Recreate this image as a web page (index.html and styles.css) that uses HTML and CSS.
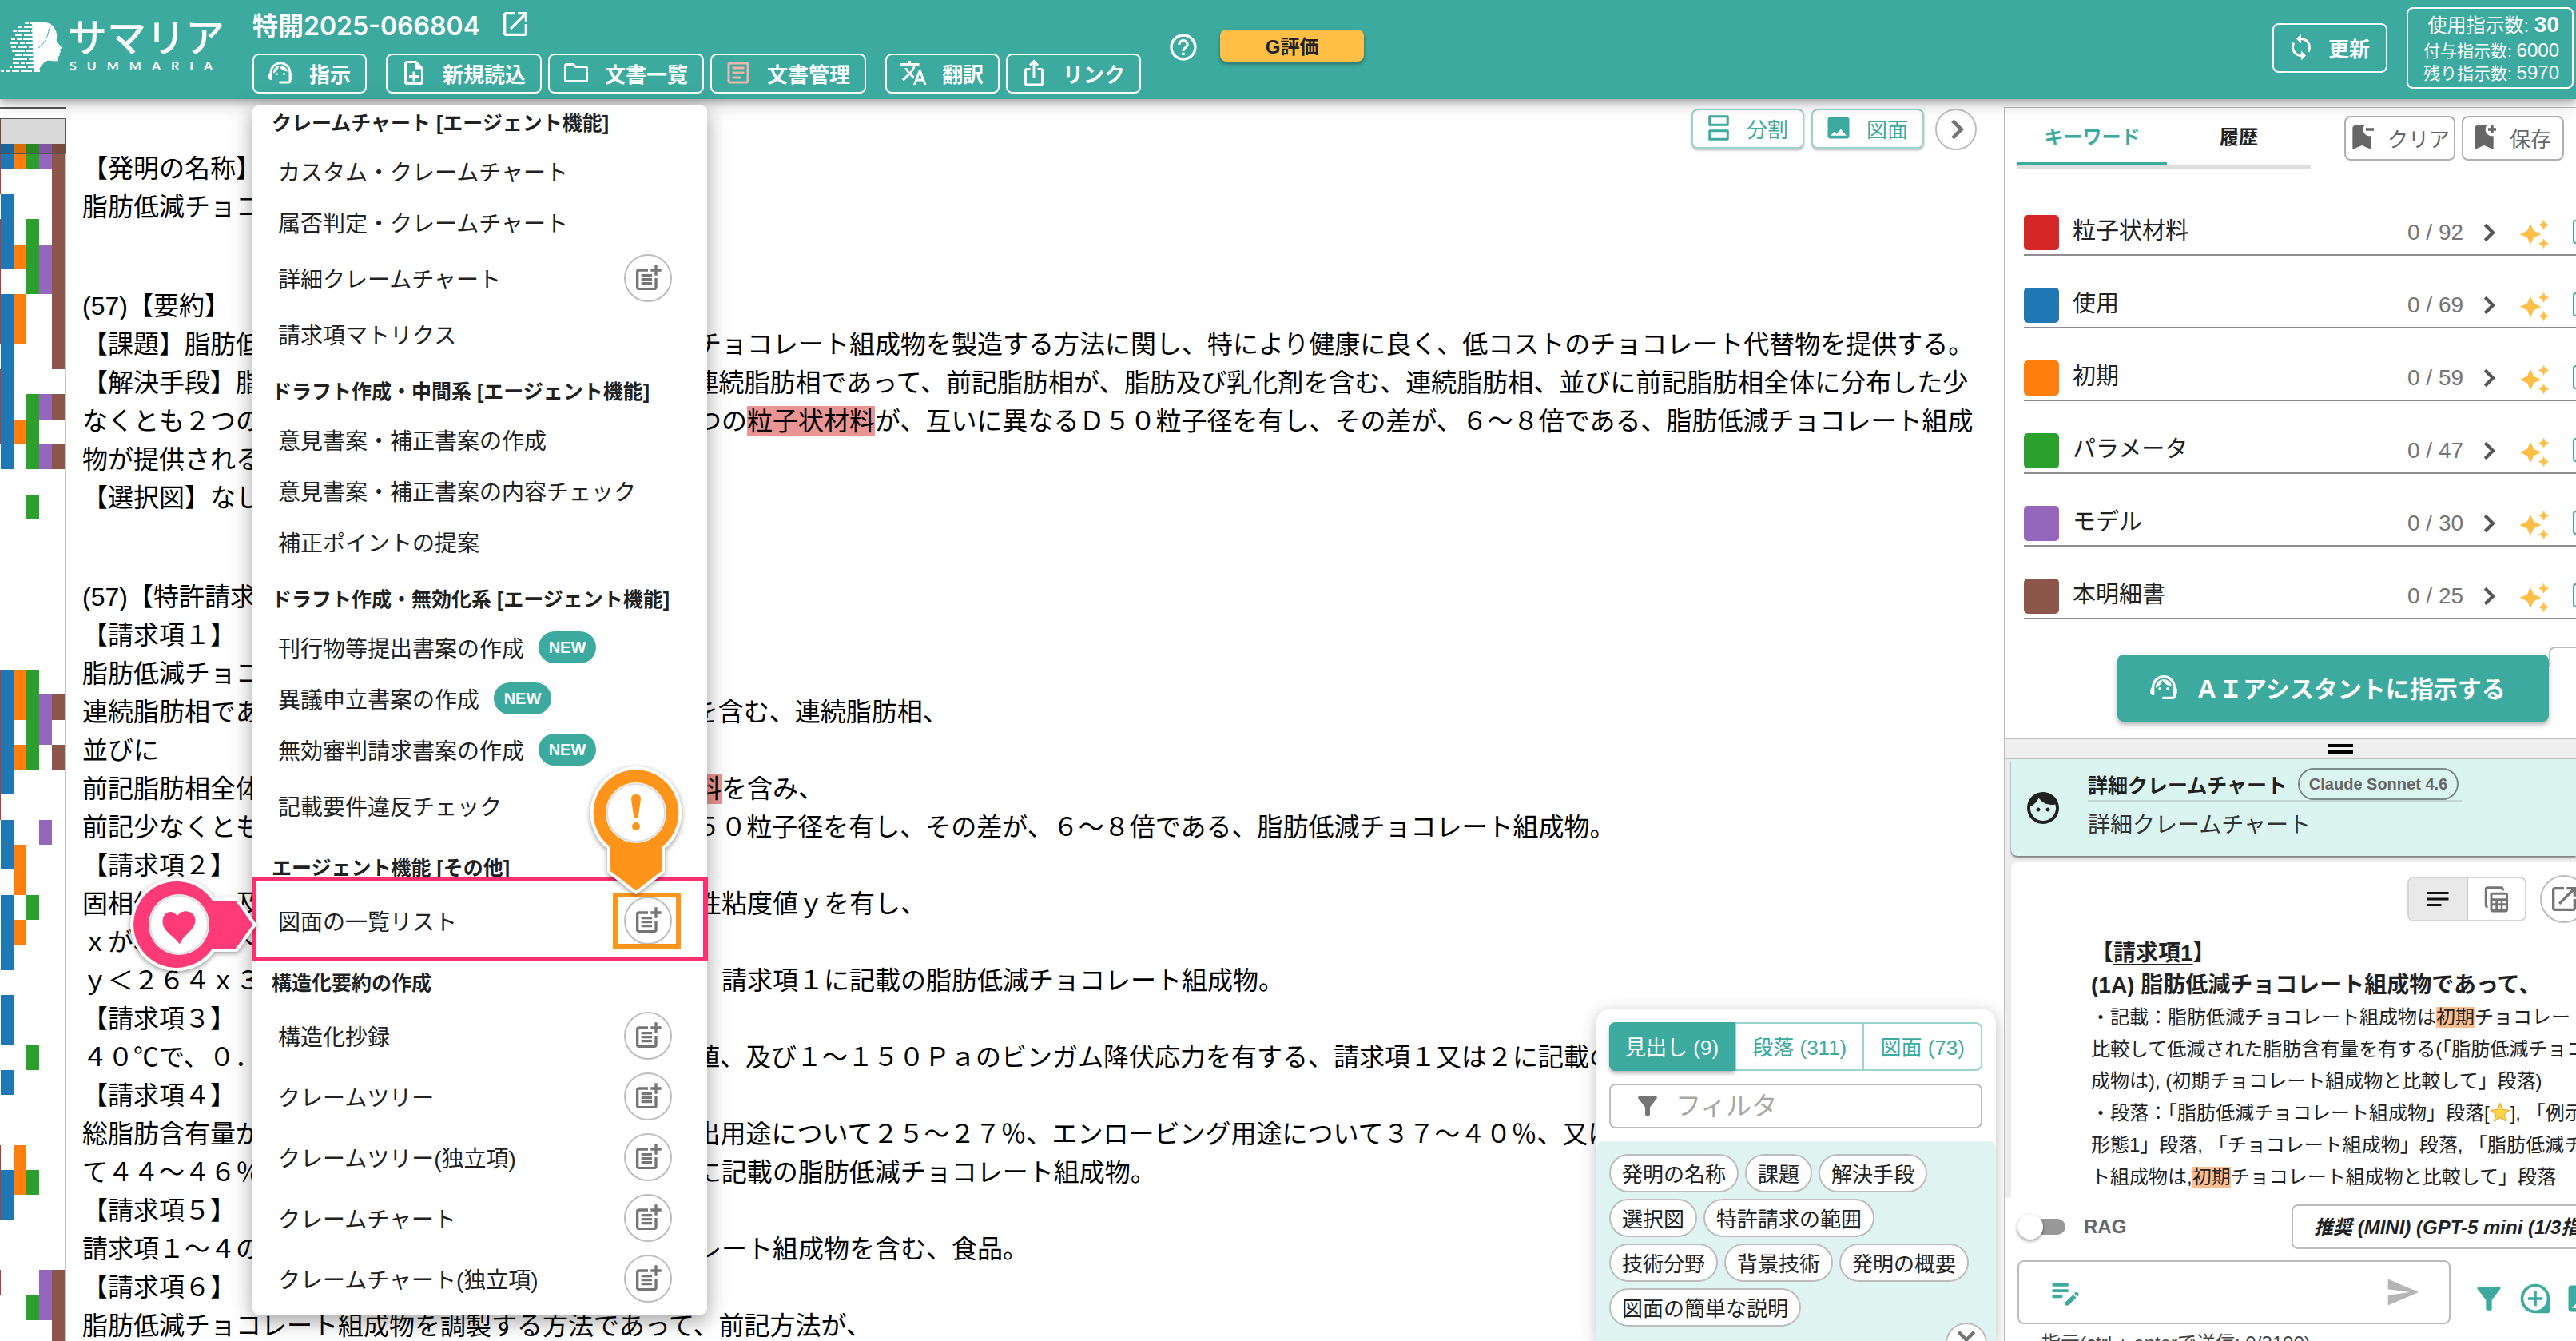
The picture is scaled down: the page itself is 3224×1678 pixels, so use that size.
FILE: index.html
```html
<!DOCTYPE html>
<html lang="ja">
<head>
<meta charset="utf-8">
<title>サマリア</title>
<link rel="stylesheet" href="styles.css">
</head>
<body>
<svg class="sprite" aria-hidden="true">
  <symbol id="i-agent" viewBox="0 0 24 24"><path d="M21 12.22C21 6.73 16.74 3 12 3c-4.69 0-9 3.65-9 9.28-.6.34-1 .98-1 1.72v2c0 1.1.9 2 2 2h1v-6.1c0-3.87 3.13-7 7-7s7 3.13 7 7V19h-8v2h8c1.1 0 2-.9 2-2v-1.22c.59-.31 1-.92 1-1.64v-2.3c0-.7-.41-1.31-1-1.62z"/><circle cx="9" cy="13" r="1"/><circle cx="15" cy="13" r="1"/><path d="M18 11.03C17.52 8.18 15.04 6 12.05 6c-3.03 0-6.29 2.51-6.03 6.45 2.47-1.01 4.33-3.21 4.86-5.89 1.31 2.63 4 4.44 7.12 4.47z"/></symbol>
  <symbol id="i-note-add" viewBox="0 0 24 24"><path d="M13 11h-2v3H8v2h3v3h2v-3h3v-2h-3zm1-9H6c-1.1 0-2 .9-2 2v16c0 1.1.89 2 1.99 2H18c1.1 0 2-.9 2-2V8l-6-6zm4 18H6V4h7v5h5v11z"/></symbol>
  <symbol id="i-folder" viewBox="0 0 24 24"><path d="M9.17 6l2 2H20v10H4V6h5.17M10 4H4c-1.1 0-1.99.9-1.99 2L2 18c0 1.1.9 2 2 2h16c1.1 0 2-.9 2-2V8c0-1.1-.9-2-2-2h-8l-2-2z"/></symbol>
  <symbol id="i-article" viewBox="0 0 24 24"><path d="M19 5v14H5V5h14m0-2H5c-1.1 0-2 .9-2 2v14c0 1.1.9 2 2 2h14c1.1 0 2-.9 2-2V5c0-1.1-.9-2-2-2zM14 17H7v-2h7v2zm3-4H7v-2h10v2zm0-4H7V7h10v2z"/></symbol>
  <symbol id="i-translate" viewBox="0 0 24 24"><path d="M12.87 15.07l-2.54-2.51.03-.03c1.74-1.94 2.98-4.17 3.71-6.53H17V4h-7V2H8v2H1v1.99h11.17C11.5 7.92 10.44 9.75 9 11.35 8.07 10.32 7.3 9.19 6.69 8h-2c.73 1.63 1.73 3.17 2.98 4.56l-5.09 5.02L4 19l5-5 3.11 3.11.76-2.04zM18.5 10h-2L12 22h2l1.12-3h4.75L21 22h2l-4.5-12zm-2.62 7l1.62-4.33L19.12 17h-3.24z"/></symbol>
  <symbol id="i-share" viewBox="0 0 24 24"><path d="M16 5l-1.42 1.42-1.59-1.59V16h-1.98V4.83L9.42 6.42 8 5l4-4 4 4zm4 5v11c0 1.1-.9 2-2 2H6c-1.11 0-2-.9-2-2V10c0-1.11.89-2 2-2h3v2H6v11h12V10h-3V8h3c1.1 0 2 .89 2 2z"/></symbol>
  <symbol id="i-help" viewBox="0 0 24 24"><path d="M11 18h2v-2h-2v2zm1-16C6.48 2 2 6.48 2 12s4.48 10 10 10 10-4.48 10-10S17.52 2 12 2zm0 18c-4.41 0-8-3.59-8-8s3.59-8 8-8 8 3.59 8 8-3.59 8-8 8zm0-14c-2.21 0-4 1.79-4 4h2c0-1.1.9-2 2-2s2 .9 2 2c0 2-3 1.75-3 5h2c0-2.25 3-2.5 3-5 0-2.21-1.79-4-4-4z"/></symbol>
  <symbol id="i-open" viewBox="0 0 24 24"><path d="M19 19H5V5h7V3H5c-1.11 0-2 .9-2 2v14c0 1.1.89 2 2 2h14c1.1 0 2-.9 2-2v-7h-2v7zM14 3v2h3.59l-9.83 9.83 1.41 1.41L19 6.41V10h2V3h-7z"/></symbol>
  <symbol id="i-sync" viewBox="0 0 24 24"><path d="M12 4V1L8 5l4 4V6c3.31 0 6 2.69 6 6 0 1.01-.25 1.97-.7 2.8l1.46 1.46C19.54 15.03 20 13.57 20 12c0-4.42-3.58-8-8-8zm0 14c-3.31 0-6-2.69-6-6 0-1.01.25-1.97.7-2.8L5.24 7.74C4.46 8.97 4 10.43 4 12c0 4.42 3.58 8 8 8v3l4-4-4-4v3z"/></symbol>
  <symbol id="i-right" viewBox="0 0 24 24"><path d="M9.5 5.5L16 12l-6.500 6.500" fill="none" stroke="currentColor" stroke-width="2.800"/></symbol>
  <symbol id="i-down" viewBox="0 0 24 24"><path d="M5.500 8.500L12 15l6.500-6.500" fill="none" stroke="currentColor" stroke-width="3"/></symbol>
  <symbol id="i-image" viewBox="0 0 24 24"><path d="M21 19V5c0-1.1-.9-2-2-2H5c-1.1 0-2 .9-2 2v14c0 1.1.9 2 2 2h14c1.1 0 2-.9 2-2zM8.500 15.200l2 2 3.500-4.200 4.500 5.500H5.500z"/></symbol>
  <symbol id="i-split" viewBox="0 0 24 24"><path d="M4.500 2.500h15v7h-15zM4.500 14.500h15v7h-15z" fill="none" stroke="currentColor" stroke-width="2" stroke-linejoin="round"/></symbol>
  <symbol id="i-funnel" viewBox="0 0 24 24"><path d="M4.25 5.61C6.27 8.2 10 13 10 13v6c0 .55.45 1 1 1h2c.55 0 1-.45 1-1v-6s3.720-4.800 5.740-7.390c.51-.66.04-1.610-.79-1.610H5.040c-.83 0-1.300.95-.79 1.610z"/></symbol>
  <symbol id="i-mark-minus" viewBox="0 0 24 24"><path d="M21 7h-6V5h6v2zM19 21l-7-3-7 3V5c0-1.1.9-2 2-2h7c-.63.84-1 1.87-1 3 0 2.76 2.24 5 5 5 .34 0 .68-.03 1-.1V21z"/></symbol>
  <symbol id="i-mark-plus" viewBox="0 0 24 24"><path d="M21 7h-2v2h-2V7h-2V5h2V3h2v2h2v2zM19 21l-7-3-7 3V5c0-1.1.9-2 2-2h7c-.63.84-1 1.87-1 3 0 2.76 2.24 5 5 5 .34 0 .68-.03 1-.1V21z"/></symbol>
  <symbol id="i-spark" viewBox="0 0 24 24"><path d="M19 9l1.25-2.75L23 5l-2.75-1.25L19 1l-1.25 2.75L15 5l2.75 1.25L19 9zm-7.5.5L9 4 6.500 9.500 1 12l5.500 2.500L9 20l2.500-5.500L17 12l-5.500-2.500zM19 15l-1.250 2.750L15 19l2.750 1.250L19 23l1.250-2.750L23 19l-2.750-1.250L19 15z"/></symbol>
  <symbol id="i-face" viewBox="0 0 24 24"><path d="M9 11.75c-.69 0-1.25.56-1.25 1.25s.56 1.25 1.25 1.25 1.25-.56 1.25-1.25-.56-1.25-1.25-1.25zm6 0c-.69 0-1.25.56-1.25 1.25s.56 1.25 1.25 1.25 1.25-.56 1.25-1.25-.56-1.25-1.25-1.25zM12 2C6.480 2 2 6.480 2 12s4.480 10 10 10 10-4.480 10-10S17.520 2 12 2zm0 18c-4.410 0-8-3.590-8-8 0-.29.02-.58.05-.86 2.360-1.050 4.230-2.980 5.210-5.370C11.070 8.330 14.050 10 17.420 10c.78 0 1.530-.09 2.250-.26.21.71.33 1.470.33 2.260 0 4.410-3.590 8-8 8z"/></symbol>
  <symbol id="i-notes" viewBox="0 0 24 24"><path d="M3 18h12v-2H3v2zM3 6v2h18V6H3zm0 7h18v-2H3v2z"/></symbol>
  <symbol id="i-table" viewBox="0 0 24 24"><path d="M5 18.500a1.500 1.500 0 0 1-1.500-1.500V4A1.500 1.500 0 0 1 5 2.500h11A1.500 1.500 0 0 1 17.500 4v1" fill="none" stroke="currentColor" stroke-width="2"/><path fill-rule="evenodd" d="M9 6.500h11a2 2 0 0 1 2 2V21a2 2 0 0 1-2 2H9a2 2 0 0 1-2-2V8.500a2 2 0 0 1 2-2zM9 8.500v3h11v-3zM9 13.500v2h2.500v-2zM13.300 13.500v2h2.500v-2zM17.500 13.500v2H20v-2zM9 17.500v3h2.500v-3zM13.300 17.500v3h2.500v-3zM17.500 17.500v3H20v-3z"/></symbol>
  <symbol id="i-edit" viewBox="0 0 24 24"><path d="M3 10h11v2H3v-2zm0-2h11V6H3v2zm0 8h7v-2H3v2zm15.010-3.130l.71-.71c.39-.39 1.020-.39 1.410 0l.71.71c.39.39.39 1.020 0 1.410l-.71.71-2.120-2.120zm-.71.71l-5.300 5.300V21h2.120l5.300-5.300-2.120-2.120z"/></symbol>
  <symbol id="i-send" viewBox="0 0 24 24"><path d="M2.010 21L23 12 2.010 3 2 10l15 2-15 2z"/></symbol>
  <symbol id="i-add-chat" viewBox="0 0 24 24"><path fill-rule="evenodd" d="M12 2a10 10 0 1 0 0 20h8a2 2 0 0 0 2-2v-8A10 10 0 0 0 12 2zm0 18a8 8 0 1 1 0-16 8 8 0 0 1 0 16z"/><path d="M13 7h-2v4H7v2h4v4h2v-4h4v-2h-4z"/></symbol>
  <symbol id="i-post-add" viewBox="0 0 24 24"><path d="M17 19.220H5V7h7V5H5c-1.100 0-2 .9-2 2v12c0 1.100.9 2 2 2h12c1.100 0 2-.9 2-2v-7h-2v7.220z"/><path d="M19 2h-2v3h-3v2h3v3h2V7h3V5h-3V2zM7 9h8v2H7zM7 12h8v2H7zM7 15h8v2H7z"/></symbol>
</svg>

<header class="topbar">
  <div class="logo">
    <svg class="logo-face" viewBox="0 0 78 64" aria-hidden="true">
      <path fill="currentColor" d="M40 1h15c9 0 14 6 16 14 1 4-1 7 0 10l6 7c1 2-2 2-2 3l1 3-2 2 1 2-2 2c1 6-3 6-8 5-7-1-9 1-11 4-4 4-5 6-5 10H42z"/>
      <path fill="none" stroke="#3caa9e" stroke-width="1" d="M64 5c-5 6-2 18-16 28"/>
      <path fill="none" stroke="currentColor" stroke-width="2" d="M31 2h5m2 0h6M22 7h6m2 0h10M16 12h5m2 0h14m2 0h5M19 17h9m2 0h12M14 22h5m2 0h6m2 0h14M13 27h10m2 0h6m2 0h10M14 32h6m2 0h12m2 0h8M15 37h16m2 0h10M19 42h8m2 0h12M16 47h18m2 0h8M16 52h8m2 0h5m2 0h10M12 57h3m2 0h16m2 0h9M1 62h4m2 0h6m2 0h9m2 0h14m2 0h8"/>
    </svg>
    <div class="logo-text"><span class="logo-name">サマリア</span><span class="logo-roman">SUMMARIA</span></div>
  </div>
  <div class="doc-tools">
    <h1 class="doc-id">特開2025-066804 <a href="#" class="doc-link" aria-label="別ウィンドウで開く"><svg class="icon"><use href="#i-open"/></svg></a></h1>
    <div class="tool-row">
      <div class="menu-anchor">
        <button class="tool"><svg class="icon icon-s"><use href="#i-agent"/></svg>指示</button>
        <div class="menu">
          <h2 class="menu-head first">クレームチャート [エージェント機能]</h2>
          <ul>
            <li><button class="item">カスタム・クレームチャート</button></li>
            <li><button class="item">属否判定・クレームチャート</button></li>
            <li class="tall"><button class="item">詳細クレームチャート</button><button class="round" aria-label="追加"><svg class="icon"><use href="#i-post-add"/></svg></button></li>
            <li><button class="item">請求項マトリクス</button></li>
          </ul>
          <h2 class="menu-head">ドラフト作成・中間系 [エージェント機能]</h2>
          <ul>
            <li><button class="item">意見書案・補正書案の作成</button></li>
            <li><button class="item">意見書案・補正書案の内容チェック</button></li>
            <li><button class="item">補正ポイントの提案</button></li>
          </ul>
          <h2 class="menu-head">ドラフト作成・無効化系 [エージェント機能]</h2>
          <ul>
            <li><button class="item">刊行物等提出書案の作成<span class="new">NEW</span></button></li>
            <li><button class="item">異議申立書案の作成<span class="new">NEW</span></button></li>
            <li><button class="item">無効審判請求書案の作成<span class="new">NEW</span></button></li>
            <li class="tall"><button class="item">記載要件違反チェック</button><button class="round" aria-label="追加"><svg class="icon"><use href="#i-post-add"/></svg></button></li>
          </ul>
          <h2 class="menu-head">エージェント機能 [その他]</h2>
          <ul>
            <li class="tall marked"><button class="item">図面の一覧リスト</button><button class="round" aria-label="追加"><svg class="icon"><use href="#i-post-add"/></svg></button>
              <span class="frame-pink"></span><span class="frame-orange"></span>
              <svg class="pin-pink" viewBox="0 0 170 124" aria-hidden="true">
                <g fill="#ff3a78" stroke="#fff" stroke-width="4" stroke-linejoin="round"><path d="M62 6a56 56 0 1 0 43 88h29l23-32-23-32h-29A56 56 0 0 0 62 6z"/></g>
                <circle cx="62" cy="62" r="38" fill="#fff"/><circle cx="62" cy="62" r="36" fill="none" stroke="#ddd" stroke-width="2"/>
                <path fill="#ff3a78" transform="rotate(10 62 62)" d="M67 86C58 76 42 74 41 60c-1-11 10-16 17-8 4-11 20-11 23 0 3 13-11 20-14 34z"/>
              </svg>
              <svg class="pin-orange" viewBox="0 0 124 166" aria-hidden="true">
                <path fill="#ff941a" stroke="#fff" stroke-width="4" stroke-linejoin="round" d="M62 6a56 56 0 0 0-34 100v30l34 26 34-26v-30A56 56 0 0 0 62 6z"/>
                <circle cx="62" cy="62" r="38" fill="#fff"/><circle cx="62" cy="62" r="36" fill="none" stroke="#ddd" stroke-width="2"/>
                <path fill="#ff941a" d="M62 39c4 0 6 2 6 6l-3 21c0 4-6 4-6 0l-3-21c0-4 2-6 6-6z"/><circle cx="62" cy="79" r="5" fill="#ff941a"/>
              </svg>
            </li>
          </ul>
          <h2 class="menu-head">構造化要約の作成</h2>
          <ul>
            <li class="tall"><button class="item">構造化抄録</button><button class="round" aria-label="追加"><svg class="icon"><use href="#i-post-add"/></svg></button></li>
            <li class="tall"><button class="item">クレームツリー</button><button class="round" aria-label="追加"><svg class="icon"><use href="#i-post-add"/></svg></button></li>
            <li class="tall"><button class="item">クレームツリー(独立項)</button><button class="round" aria-label="追加"><svg class="icon"><use href="#i-post-add"/></svg></button></li>
            <li class="tall"><button class="item">クレームチャート</button><button class="round" aria-label="追加"><svg class="icon"><use href="#i-post-add"/></svg></button></li>
            <li class="tall"><button class="item">クレームチャート(独立項)</button><button class="round" aria-label="追加"><svg class="icon"><use href="#i-post-add"/></svg></button></li>
          </ul>
        </div>
      </div>
      <div class="tool-group">
        <button class="tool"><svg class="icon icon-s"><use href="#i-note-add"/></svg>新規読込</button>
        <button class="tool"><svg class="icon icon-s"><use href="#i-folder"/></svg>文書一覧</button>
        <button class="tool"><svg class="icon icon-s pink"><use href="#i-article"/></svg>文書管理</button>
      </div>
      <div class="tool-group">
        <button class="tool"><svg class="icon icon-s"><use href="#i-translate"/></svg>翻訳</button>
        <button class="tool"><svg class="icon icon-s"><use href="#i-share"/></svg>リンク</button>
      </div>
    </div>
  </div>
  <button class="help" aria-label="ヘルプ"><svg class="icon"><use href="#i-help"/></svg></button>
  <button class="rating">G評価</button>
  <button class="tool refresh"><svg class="icon icon-s"><use href="#i-sync"/></svg>更新</button>
  <div class="usage">
    <div class="usage-main">使用指示数: <b>30</b></div>
    <div class="usage-sub">付与指示数: <span>6000</span></div>
    <div class="usage-sub">残り指示数: <span>5970</span></div>
  </div>
</header>

<main class="layout">
  <nav class="minimap" aria-label="出現位置">
    <svg width="82" height="1544" viewBox="0 134 82 1544" aria-hidden="true">
      <path fill="#b03a3e" d="M0 148h1v95h-1zM0 274h1v157h-1zM0 462h1v94h-1zM0 838h1v188h-1zM0 1433h1v93h-1zM0 1589h1v31h-1z"/>
      <path fill="#1f77b4" d="M1 180h16v32h-16zM1 243h16v94h-16zM1 368h16v219h-16zM1 838h16v156h-16zM1 1026h16v62h-16zM1 1120h16v94h-16zM1 1245h16v63h-16zM1 1339h16v31h-16zM1 1464h16v62h-16z"/>
      <path fill="#ff7f0e" d="M17 180h16v32h-16zM17 306h16v31h-16zM17 368h16v63h-16zM17 525h16v31h-16zM17 838h16v63h-16zM17 932h16v31h-16zM17 1057h16v63h-16zM17 1151h16v31h-16zM17 1433h16v62h-16z"/>
      <path fill="#2ca02c" d="M33 180h16v32h-16zM33 274h16v94h-16zM33 493h16v94h-16zM33 619h16v31h-16zM33 838h16v125h-16zM33 1120h16v31h-16zM33 1308h16v31h-16zM33 1464h16v31h-16zM33 1620h16v32h-16z"/>
      <path fill="#9467bd" d="M49 180h16v32h-16zM49 306h16v62h-16zM49 493h16v32h-16zM49 556h16v31h-16zM49 869h16v63h-16zM49 1026h16v31h-16zM49 1589h16v63h-16z"/>
      <path fill="#8c564b" d="M65 180h16v282h-16zM65 493h16v32h-16zM65 556h16v31h-16zM65 869h16v32h-16zM65 932h16v31h-16zM65 1589h16v89h-16z"/>
      <path fill="#555" d="M0 134h82v2h-82z"/>
      <path fill="#000" fill-opacity=".15" stroke="#555" d="M0 148.500h81.500v44h-81.500z"/>
      <path fill="#c4c4c4" d="M81 193h1v1485h-1z"/>
    </svg>
  </nav>

  <section class="document">
    <article class="doc-text">
      <div class="block">
        <p>【発明の名称】</p>
        <p>脂肪低減チョコレート</p>
      </div>
      <div class="block">
        <p>(57)【要約】</p>
        <p>【課題】脂肪低減チョコレート組成物及び該脂肪低減チョコレート組成物を製造する方法に関し、特により健康に良く、低コストのチョコレート代替物を提供する。</p>
        <p>【解決手段】脂肪低減チョコレート組成物であって、連続脂肪相であって、前記脂肪相が、脂肪及び乳化剤を含む、連続脂肪相、並びに前記脂肪相全体に分布した少</p>
        <p>なくとも２つの粒子状材料を含み、前記少なくとも２つの<mark>粒子状材料</mark>が、互いに異なるＤ５０粒子径を有し、その差が、６～８倍である、脂肪低減チョコレート組成</p>
        <p>物が提供される。</p>
        <p>【選択図】なし</p>
      </div>
      <div class="block">
        <p>(57)【特許請求の範囲】</p>
        <p>【請求項１】</p>
        <p>脂肪低減チョコレート組成物であって、</p>
        <p>連続脂肪相であって、前記脂肪相が、脂肪及び乳化剤を含む、連続脂肪相、</p>
        <p>並びに</p>
        <p>前記脂肪相全体に分布した少なくとも２つの<mark>粒子状材料</mark>を含み、</p>
        <p>前記少なくとも２つの粒子状材料が、互いに異なるＤ５０粒子径を有し、その差が、６～８倍である、脂肪低減チョコレート組成物。</p>
        <p>【請求項２】</p>
        <p>固相体積ｘ、及び該脂肪低減チョコレート組成物の塑性粘度値ｙを有し、</p>
        <p>ｘが、０．５～０．８であり、</p>
        <p>ｙ＜２６４ｘ３－４９４ｘ２＋３０６ｘ－６２．４３、請求項１に記載の脂肪低減チョコレート組成物。</p>
        <p>【請求項３】</p>
        <p>４０℃で、０．１～２０Ｐａ・ｓのプラスチック粘度値、及び１～１５０Ｐａのビンガム降伏応力を有する、請求項１又は２に記載の脂肪低減チョコレート組成物。</p>
        <p>【請求項４】</p>
        <p>総脂肪含有量が、成形用途について２８～３０％、押出用途について２５～２７％、エンロービング用途について３７～４０％、又はアイスクリーム用途につい</p>
        <p>て４４～４６％である、請求項１～３のいずれか１項に記載の脂肪低減チョコレート組成物。</p>
        <p>【請求項５】</p>
        <p>請求項１～４のいずれか一項に記載の脂肪低減チョコレート組成物を含む、食品。</p>
        <p>【請求項６】</p>
        <p>脂肪低減チョコレート組成物を調製する方法であって、前記方法が、</p>
      </div>
    </article>

    <div class="view-tools">
      <button class="view"><svg class="icon icon-s"><use href="#i-split"/></svg>分割</button>
      <button class="view"><svg class="icon icon-s"><use href="#i-image"/></svg>図面</button>
      <button class="round small" aria-label="次へ"><svg class="icon"><use href="#i-right"/></svg></button>
    </div>

    <div class="outline">
      <div class="outline-tabs">
        <button class="on">見出し (9)</button><button>段落 (311)</button><button>図面 (73)</button>
      </div>
      <label class="filter"><svg class="icon icon-s"><use href="#i-funnel"/></svg><input type="text" placeholder="フィルタ" aria-label="フィルタ"></label>
      <div class="chips">
        <button>発明の名称</button><button>課題</button><button>解決手段</button><button>選択図</button><button>特許請求の範囲</button><button>技術分野</button><button>背景技術</button><button>発明の概要</button><button>図面の簡単な説明</button>
      </div>
      <button class="round small to-bottom" aria-label="下へ"><svg class="icon icon-s"><use href="#i-down"/></svg></button>
    </div>
  </section>

  <aside class="side">
    <section class="keywords">
      <div class="side-bar">
        <div class="tabs"><button class="on">キーワード</button><button>履歴</button></div>
        <button class="ghost"><svg class="icon"><use href="#i-mark-minus"/></svg>クリア</button>
        <button class="ghost wide"><svg class="icon"><use href="#i-mark-plus"/></svg>保存</button>
      </div>
      <ul class="kw-list">
        <li><span class="swatch red"></span><span class="kw">粒子状材料</span><span class="count">0 / 92</span><button class="plain next" aria-label="次へ"><svg class="icon"><use href="#i-right"/></svg></button><button class="plain spark" aria-label="提案"><svg class="icon"><use href="#i-spark"/></svg></button><button class="tick" aria-label="選択"></button></li>
        <li><span class="swatch blue"></span><span class="kw">使用</span><span class="count">0 / 69</span><button class="plain next" aria-label="次へ"><svg class="icon"><use href="#i-right"/></svg></button><button class="plain spark" aria-label="提案"><svg class="icon"><use href="#i-spark"/></svg></button><button class="tick" aria-label="選択"></button></li>
        <li><span class="swatch orange"></span><span class="kw">初期</span><span class="count">0 / 59</span><button class="plain next" aria-label="次へ"><svg class="icon"><use href="#i-right"/></svg></button><button class="plain spark" aria-label="提案"><svg class="icon"><use href="#i-spark"/></svg></button><button class="tick" aria-label="選択"></button></li>
        <li><span class="swatch green"></span><span class="kw">パラメータ</span><span class="count">0 / 47</span><button class="plain next" aria-label="次へ"><svg class="icon"><use href="#i-right"/></svg></button><button class="plain spark" aria-label="提案"><svg class="icon"><use href="#i-spark"/></svg></button><button class="tick" aria-label="選択"></button></li>
        <li><span class="swatch purple"></span><span class="kw">モデル</span><span class="count">0 / 30</span><button class="plain next" aria-label="次へ"><svg class="icon"><use href="#i-right"/></svg></button><button class="plain spark" aria-label="提案"><svg class="icon"><use href="#i-spark"/></svg></button><button class="tick" aria-label="選択"></button></li>
        <li><span class="swatch brown"></span><span class="kw">本明細書</span><span class="count">0 / 25</span><button class="plain next" aria-label="次へ"><svg class="icon"><use href="#i-right"/></svg></button><button class="plain spark" aria-label="提案"><svg class="icon"><use href="#i-spark"/></svg></button><button class="tick" aria-label="選択"></button></li>
      </ul>
      <div class="ask-row"><button class="ask"><svg class="icon"><use href="#i-agent"/></svg>ＡＩアシスタントに指示する</button><button class="more" aria-label="追加"></button></div>
    </section>
    <div class="splitter" role="separator"><span></span><span></span></div>
    <section class="chat">
      <div class="ask-card">
        <svg class="icon face"><use href="#i-face"/></svg>
        <div class="ask-body">
          <div class="ask-head"><b>詳細クレームチャート</b><span class="model">Claude Sonnet 4.6</span></div>
          <p>詳細クレームチャート</p>
        </div>
      </div>
      <div class="answer">
        <div class="answer-tools">
          <div class="toggle"><button class="on" aria-label="文章"><svg class="icon"><use href="#i-notes"/></svg></button><button aria-label="表"><svg class="icon"><use href="#i-table"/></svg></button></div>
          <button class="round" aria-label="開く"><svg class="icon"><use href="#i-open"/></svg></button>
        </div>
        <div class="answer-text">
          <h3>【<u>請求項1</u>】</h3>
          <h3>(1A) 脂肪低減チョコレート組成物であって、</h3>
          <p>・記載：脂肪低減チョコレート組成物は<mark>初期</mark>チョコレート組成物と</p>
          <p>比較して低減された脂肪含有量を有する(「脂肪低減チョコレート組</p>
          <p>成物は), (初期チョコレート組成物と比較して」段落)</p>
          <p>・段落：「脂肪低減チョコレート組成物」段落[<svg class="star" viewBox="0 0 24 24" role="img" aria-label="星"><path fill="#ffd54a" stroke="#e8a92c" d="M12 1.500l3 7.300 7.800.6-6 5.100 1.900 7.700L12 18l-6.700 4.200 1.900-7.700-6-5.100 7.800-.6z"/></svg>], 「例示的な実施</p>
          <p>形態1」段落, 「チョコレート組成物」段落, 「脂肪低減チョコレー</p>
          <p>ト組成物は,<mark>初期</mark>チョコレート組成物と比較して」段落</p>
        </div>
      </div>
    </section>
    <form class="composer">
      <div class="options">
        <label class="rag"><input type="checkbox">RAG</label>
        <select aria-label="モデル"><option>推奨 (MINI) (GPT-5 mini (1/3指示数))</option></select>
      </div>
      <div class="entry">
        <div class="box"><svg class="icon teal"><use href="#i-edit"/></svg><textarea aria-label="指示" rows="1"></textarea><button type="button" class="plain send" aria-label="送信"><svg class="icon"><use href="#i-send"/></svg></button></div>
        <div class="entry-tools">
          <button type="button" class="plain teal" aria-label="絞り込み"><svg class="icon"><use href="#i-funnel"/></svg></button>
          <button type="button" class="plain teal" aria-label="チャットを追加"><svg class="icon"><use href="#i-add-chat"/></svg></button>
          <button type="button" class="plain teal" aria-label="画像"><svg class="icon"><use href="#i-image"/></svg></button>
        </div>
      </div>
      <p class="hint">指示(ctrl + enterで送信: 0/3100)</p>
    </form>
  </aside>
</main>
</body>
</html>
```
FILE: styles.css
```css
:root {
  --teal: #3caa9e;
  --ink: #212121;
  --gray: #757575;
  --line: #bdbdbd;
}

* { box-sizing: border-box; }

body {
  margin: 0;
  height: 100vh;
  overflow: hidden;
  display: flex;
  flex-direction: column;
  background: #fff;
  color: var(--ink);
  font-family: "Liberation Sans", "Noto Sans CJK JP", sans-serif;
  font-size: 24px;
}

h1, h2, h3, p, ul { margin: 0; padding: 0; }
ul { list-style: none; }

button, input, select, textarea {
  font: inherit;
  color: inherit;
  margin: 0;
  padding: 0;
  border: 0;
  background: none;
}

.sprite { position: absolute; width: 0; height: 0; }
.icon { width: 40px; height: 40px; fill: currentColor; flex: none; display: block; }
.icon-s { width: 36px; height: 36px; }
.pink { color: #f2b5ae; }
.teal { color: var(--teal); }
.plain { display: flex; }

/* top bar */
.topbar {
  position: relative;
  z-index: 2;
  flex: none;
  height: 124px;
  display: flex;
  align-items: flex-start;
  background: var(--teal);
  color: #fff;
  box-shadow: 0 4px 8px rgba(0, 0, 0, .25), 0 8px 20px rgba(0, 0, 0, .15);
}

.logo { display: flex; width: 316px; padding: 27px 0 0; gap: 7px; flex: none; }
.logo-face { width: 78px; height: 64px; flex: none; }
.logo-text { display: flex; flex-direction: column; }
.logo-name { font-size: 49px; font-weight: 500; line-height: 42px; }
.logo-roman { font-family: Lato, sans-serif; font-size: 16px; font-weight: 700; line-height: 26px; letter-spacing: 13px; padding-left: 2px; }

.doc-id {
  display: flex;
  align-items: center;
  gap: 24px;
  height: 60px;
  font-family: Inter, "Noto Sans CJK JP", sans-serif;
  font-size: 32px;
  font-weight: 600;
}
.doc-link { color: #fff; }
.tool-row { display: flex; gap: 24px; padding-top: 7px; }
.tool-group { display: flex; gap: 8px; }

.tool {
  display: flex;
  align-items: center;
  gap: 18px;
  height: 50px;
  padding: 0 18px 2px 15px;
  border: 2px solid #fff;
  border-radius: 8px;
  font-size: 26px;
  font-weight: 700;
  white-space: nowrap;
}
.help { margin: 39px 26px 0 33px; }
.rating {
  width: 180px;
  height: 40px;
  margin-top: 37px;
  padding-bottom: 2px;
  border-radius: 8px;
  background: #ffbf47;
  color: #222;
  font-size: 24px;
  font-weight: 700;
  box-shadow: 0 3px 5px rgba(0, 0, 0, .35);
}
.refresh { height: 62px; margin: 29px 24px 0 auto; padding: 0 20px 2px 16px; gap: 16px; }
.usage {
  width: 209px;
  height: 102px;
  margin: 9px 3px 0 0;
  padding: 2px 16px 0 0;
  border: 2px solid #fff;
  border-radius: 8px;
  text-align: right;
  white-space: nowrap;
}
.usage-main { font-size: 24px; line-height: 35px; }
.usage-main b { font-size: 28px; }
.usage-sub { font-size: 21px; line-height: 27px; }
.usage-sub span { font-size: 24px; }

/* instruction menu */
.menu-anchor { position: relative; }
.menu {
  position: absolute;
  top: 65px;
  left: 0;
  width: 569px;
  padding-bottom: 7px;
  border-radius: 8px;
  background: #fff;
  color: var(--ink);
  box-shadow: 0 10px 20px rgba(0, 0, 0, .2), 0 4px 32px rgba(0, 0, 0, .2);
}
.menu-head { padding: 20px 24px 8px; font-size: 25px; line-height: 40px; font-weight: 700; white-space: nowrap; }
.menu-head.first { padding-top: 2px; }
.menu li { position: relative; display: flex; align-items: center; height: 64px; padding: 0 44px 0 32px; }
.menu li.tall { height: 76px; }
.item { flex: 1; display: flex; align-items: center; gap: 18px; font-size: 28px; text-align: left; }
.new {
  width: 72px;
  border-radius: 20px;
  background: var(--teal);
  color: #fff;
  font-size: 20px;
  line-height: 40px;
  font-weight: 700;
  text-align: center;
}
.round {
  display: flex;
  align-items: center;
  justify-content: center;
  width: 60px;
  height: 60px;
  flex: none;
  border: 2px solid var(--line);
  border-radius: 50%;
  background: #fff;
  color: var(--gray);
}
.round.small { width: 52px; height: 52px; }

/* callouts on the marked row */
.frame-pink { position: absolute; inset: -17px -1px -13px; border: 6px solid #ff2f70; }
.frame-orange { position: absolute; top: 3px; right: 33px; width: 85px; height: 70px; border: 6px solid #ff941a; }
.pin-pink { position: absolute; left: -154px; top: -19px; width: 170px; height: 124px; filter: drop-shadow(0 2px 3px rgba(0, 0, 0, .4)); }
.pin-orange { position: absolute; left: 418px; top: -159px; width: 124px; height: 166px; filter: drop-shadow(0 2px 3px rgba(0, 0, 0, .4)); }

/* body */
.layout { flex: 1; min-height: 0; display: flex; }
.minimap { width: 82px; flex: none; padding-top: 10px; overflow: hidden; }
.minimap svg { display: block; }

.document { position: relative; flex: 1; min-width: 0; overflow: hidden; }
.doc-text { padding: 63px 21px 0; color: #000; font-size: 32px; line-height: 48px; white-space: nowrap; text-spacing-trim: space-all; }
.block { margin-bottom: 76px; }
.doc-text p { height: 48px; }
.doc-text mark { display: inline-block; line-height: 38px; background: #ea9494; color: inherit; }

.view-tools { position: absolute; top: 12px; right: 34px; display: flex; gap: 9px; }
.view-tools .round { margin-left: 5px; }
.view {
  display: flex;
  align-items: center;
  gap: 17px;
  width: 141px;
  height: 50px;
  padding: 0 0 2px 14px;
  border: 2px solid #9ed4ce;
  border-radius: 8px;
  background: #fff;
  color: var(--teal);
  font-size: 26px;
  box-shadow: 0 2px 3px rgba(0, 0, 0, .3);
}

.outline {
  position: absolute;
  right: 10px;
  bottom: 0;
  width: 500px;
  overflow: hidden;
  border-radius: 16px 16px 0 0;
  background: #fff;
  box-shadow: 0 4px 20px rgba(0, 0, 0, .25);
}
.outline-tabs { display: flex; height: 61px; margin: 16px 17px 16px 16px; border: 2px solid #9ed4ce; border-radius: 8px; color: var(--teal); font-size: 26px; }
.outline-tabs button { flex: 1 1 auto; padding-bottom: 2px; border-left: 2px solid #9ed4ce; white-space: nowrap; }
.outline-tabs button:first-child { border-left: 0; }
.outline-tabs .on { margin: -2px 0 -2px -2px; border-radius: 8px 0 0 8px; background: var(--teal); color: #fff; box-shadow: 0 3px 5px rgba(0, 0, 0, .3); }
.filter { display: flex; align-items: center; gap: 17px; height: 56px; margin: 0 17px 16px 16px; padding-left: 28px; border: 2px solid var(--line); border-radius: 8px; color: var(--gray); }
.filter input { flex: 1; min-width: 0; font-size: 32px; line-height: 48px; outline: 0; }
.filter input::placeholder { color: #a8a8a8; }
.chips { display: flex; flex-wrap: wrap; gap: 8px; padding: 16px 16px 18px; border-radius: 8px 8px 0 0; background: #dff4f1; }
.chips button { height: 48px; padding: 0 14px 2px; border: 2px solid var(--line); border-radius: 24px; background: #fff; font-size: 26px; }
.round.to-bottom { position: absolute; right: 11px; bottom: -29px; padding-bottom: 18px; }

/* right column */
.side { width: 716px; flex: none; margin-top: 10px; display: flex; flex-direction: column; overflow: hidden; border: 1px solid var(--line); border-width: 1px 0 0 1px; white-space: nowrap; }
.keywords { height: 789px; flex: none; }
.side-bar { display: flex; padding: 10px 0 0 16px; }
.tabs { display: flex; width: 367px; height: 66px; margin-right: 42px; border-bottom: 4px solid #ddd; font-size: 24px; font-weight: 700; }
.tabs button { width: 180px; padding-bottom: 14px; }
.tabs .on { width: 187px; padding-bottom: 10px; border-bottom: 4px solid var(--teal); color: var(--teal); }
.ghost { display: flex; align-items: center; gap: 12px; width: 139px; height: 56px; margin-right: 8px; padding-bottom: 2px; border: 2px solid #b0b0b0; border-radius: 8px; color: #666; font-size: 26px; }
.ghost.wide { width: 128px; padding-left: 6px; }

.kw-list { padding: 18px 0 0 24px; }
.kw-list li { display: flex; align-items: flex-end; width: 760px; height: 91px; padding-bottom: 5px; border-bottom: 2px solid #8e8e92; }
.kw-list li > * { flex: none; }
.swatch { width: 44px; height: 44px; margin-right: 17px; border-radius: 5px; }
.red { background: #d62728; }
.blue { background: #1f77b4; }
.orange { background: #ff7f0e; }
.green { background: #2ca02c; }
.purple { background: #9467bd; }
.brown { background: #8c564b; }
.kw { width: 419px; font-size: 29px; line-height: 48px; }
.count { width: 78px; color: var(--gray); font-size: 28px; line-height: 44px; }
.next { margin: 0 20px 2px 5px; color: #555; }
.next .icon { width: 36px; height: 40px; }
.spark { color: #ffbf47; margin-right: 28px; }
.tick { width: 30px; height: 30px; margin-bottom: 8px; border: 2px solid var(--teal); border-radius: 4px; }

.ask-row { display: flex; padding: 34px 0 0 141px; }
.ask { display: flex; align-items: center; gap: 19px; width: 540px; height: 84px; flex: none; margin-top: 10px; padding: 0 0 2px 38px; border-radius: 8px; background: var(--teal); color: #fff; font-size: 30px; font-weight: 700; box-shadow: 0 4px 6px rgba(0, 0, 0, .3); }
.more { width: 120px; height: 26px; flex: none; border: 2px solid var(--line); border-bottom: 0; border-radius: 8px 8px 0 0; }

.splitter { flex: none; height: 26px; display: flex; flex-direction: column; align-items: center; gap: 4px; padding: 6px 0 0 124px; background: #eee; border: 1px solid var(--line); border-width: 1px 0; }
.splitter span { width: 32px; height: 4px; background: #000; }

.chat { flex: none; height: 549px; overflow: hidden; padding-left: 8px; background: #ececec; display: flex; flex-direction: column; gap: 8px; }
.ask-card { display: flex; align-items: center; gap: 32px; height: 121px; flex: none; padding-left: 16px; border-radius: 0 0 0 8px; background: #daf4ef; box-shadow: 0 2px 3px rgba(0, 0, 0, .5); }
.face { width: 48px; height: 48px; }
.ask-head { display: flex; align-items: center; gap: 14px; width: 468px; border-bottom: 2px solid #c0d6d2; font-size: 25px; }
.model { width: 201px; border: 2px solid #7c8a88; border-radius: 20px; color: #666; font-size: 20px; line-height: 36px; font-weight: 700; text-align: center; }
.ask-body p { padding-top: 3px; font-size: 28px; line-height: 54px; color: #333; }

.answer { flex: 1; padding-top: 16px; border-radius: 8px 0 0; background: #fff; }
.answer-tools { display: flex; align-items: center; gap: 17px; padding-left: 496px; height: 60px; }
.toggle { display: flex; width: 149px; height: 56px; flex: none; border: 2px solid #d5d5d5; border-radius: 8px; overflow: hidden; color: var(--gray); }
.toggle button { flex: 1; display: flex; align-items: center; justify-content: center; }
.toggle .on { background: #e9e9e9; color: #111; border-right: 2px solid #ccc; }
.toggle .icon { width: 36px; height: 36px; }
.answer-text { padding: 18px 0 0 100px; line-height: 40px; }
.answer-text h3 { font-size: 28px; }
.answer-text u { text-underline-offset: 4px; }
.answer-text mark { display: inline-block; line-height: 26px; background: #ffbe90; color: inherit; }
.answer-text p { font-size: 24px; height: 40px; }
.star { width: 26px; height: 26px; vertical-align: -4px; }

.composer { padding: 8px 0 0 16px; }
.options { display: flex; align-items: center; justify-content: space-between; width: 740px; }
.rag { display: flex; align-items: center; gap: 23px; color: #666; font-weight: 700; }
.rag input { appearance: none; position: relative; width: 60px; height: 20px; border-radius: 10px; background: #999; }
.rag input::before { content: ""; position: absolute; left: 0; top: -6px; width: 32px; height: 32px; border-radius: 50%; background: #fff; box-shadow: 0 2px 4px rgba(0, 0, 0, .4); }
.options select { appearance: none; width: 397px; height: 56px; padding-left: 26px; border: 2px solid var(--line); border-radius: 8px; font-weight: 700; font-style: italic; }
.entry { display: flex; align-items: center; gap: 26px; width: 760px; margin-top: 14px; }
.entry-tools { display: flex; gap: 14px; padding-top: 16px; }
.box { display: flex; align-items: center; width: 542px; height: 80px; flex: none; padding: 0 36px 0 36px; border: 2px solid var(--line); border-radius: 8px; }
.box textarea { flex: 1; min-width: 0; resize: none; outline: 0; }
.entry .icon { width: 44px; height: 44px; }
.send { color: #b5b5b5; }
.hint { padding: 6px 0 0 30px; line-height: 36px; color: #444; }
```
